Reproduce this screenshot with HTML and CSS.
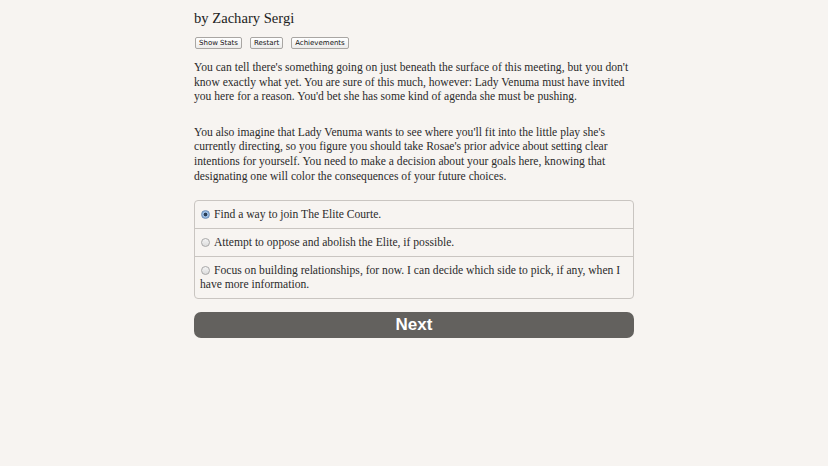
FILE: index.html
```html
<!DOCTYPE html>
<html>
<head>
<meta charset="utf-8">
<link rel="stylesheet" href="styles.css">
</head>
<body>
<div class="container">
  <div class="header">
    <h2 class="author">by Zachary Sergi</h2>
    <div class="buttons">
      <button class="small">Show Stats</button>
      <button class="small">Restart</button>
      <button class="small">Achievements</button>
    </div>
  </div>
  <div class="text">
    <p>You can tell there's something going on just beneath the surface of this meeting, but you don't know exactly what yet. You are sure of this much, however: Lady Venuma must have invited you here for a reason. You'd bet she has some kind of agenda she must be pushing.</p>
    <p>You also imagine that Lady Venuma wants to see where you'll fit into the little play she's currently directing, so you figure you should take Rosae's prior advice about setting clear intentions for yourself. You need to make a decision about your goals here, knowing that designating one will color the consequences of your future choices.</p>
  </div>
  <form class="choice">
    <label class="opt"><span class="radio checked"></span>Find a way to join The Elite Courte.</label>
    <label class="opt"><span class="radio"></span>Attempt to oppose and abolish the Elite, if possible.</label>
    <label class="opt"><span class="radio"></span>Focus on building relationships, for now. I can decide which side to pick, if any, when I have more information.</label>
  </form>
  <button class="next">Next</button>
</div>
</body>
</html>
```

FILE: styles.css
```css
html, body {
  margin: 0;
  padding: 0;
  background: #f7f4f1;
}
body {
  font-family: "Liberation Serif", "Times New Roman", serif;
  color: #2b2b2b;
}
.container {
  width: 440px;
  margin: 0 auto;
  padding-top: 9px;
}
.author {
  margin: 0;
  font-weight: normal;
  font-size: 14.6px;
  line-height: 18px;
  color: #222;
}
.buttons {
  display: flex;
  gap: 8px;
  margin-top: 10px;
  padding-left: 1px;
}
.small {
  font-family: "DejaVu Sans", sans-serif;
  font-size: 7px;
  height: 12px;
  padding: 0 3px;
  line-height: 10px;
  border: 1px solid #a9a6a3;
  border-radius: 2px;
  background: linear-gradient(#ffffff, #ecebea);
  color: #111;
}
.text {
  margin-top: 12px;
  font-size: 11.6px;
  line-height: 14.6px;
}
.text p {
  margin: 0 0 21px 0;
}
.text p:last-child {
  margin-bottom: 0;
}
.choice {
  margin-top: 16px;
  border: 1px solid #c9c5c1;
  border-radius: 4px;
  display: flex;
  flex-direction: column;
}
.opt {
  display: block;
  font-size: 11.6px;
  line-height: 14px;
  padding: 7px 5px 6px 5px;
  border-top: 1px solid #c9c5c1;
}
.opt:first-child {
  border-top: none;
}
.radio {
  display: inline-block;
  width: 7px;
  height: 7px;
  border: 1px solid #a8a8a8;
  border-radius: 50%;
  background: linear-gradient(#f4f4f4, #dcdcdc);
  margin: 0 4px 0 1px;
  vertical-align: -1px;
}
.radio.checked {
  border-color: #6f8fb8;
  background: radial-gradient(circle, #2a3d55 0 1.6px, #9fc0e6 2.2px, #7aa3d4 100%);
}
.next {
  display: block;
  width: 440px;
  height: 26px;
  margin-top: 13px;
  border: none;
  border-radius: 7px;
  background: #63615e;
  color: #fff;
  font-family: "Liberation Sans", Arial, sans-serif;
  font-weight: bold;
  font-size: 17px;
}
```
